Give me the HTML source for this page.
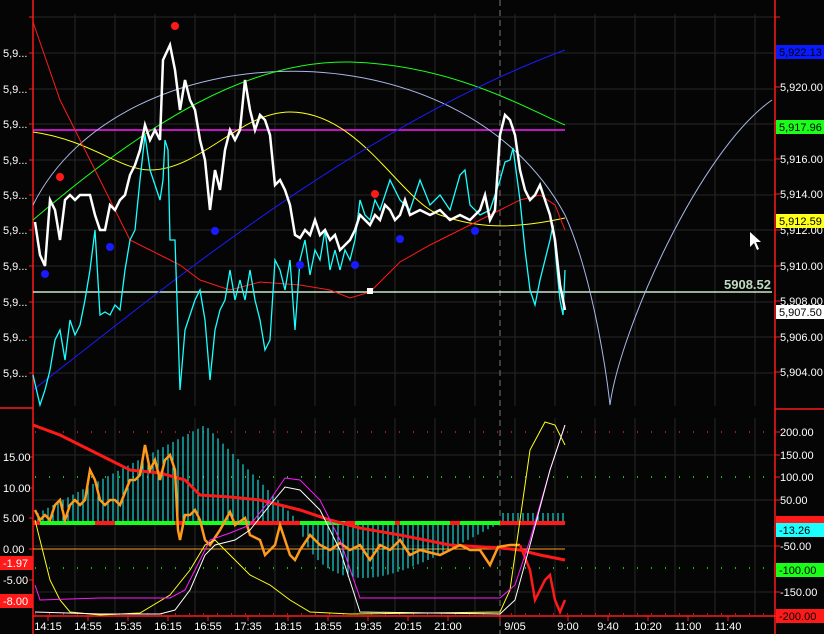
<!DOCTYPE html>
<html><head><meta charset="utf-8"><style>
html,body{margin:0;padding:0;background:#050505;}
svg{display:block;font-family:"Liberation Sans",sans-serif;}
</style></head><body>
<svg width="824" height="634" viewBox="0 0 824 634" xmlns="http://www.w3.org/2000/svg">
<rect width="824" height="634" fill="#050505"/>
<g stroke="#262626" stroke-width="1">
<path d="M75 14V406M115 14V406M155 14V406M195 14V406M235 14V406M275 14V406M315 14V406M355 14V406M395 14V406M435 14V406M475 14V406M515 14V406M555 14V406M595 14V406M635 14V406M675 14V406M715 14V406M755 14V406"/>
<path d="M33 17H775M33 53H775M33 89H775M33 124H775M33 160H775M33 195H775M33 230H775M33 266H775M33 302H775M33 337H775M33 373H775"/>
<path d="M75 418V616M115 418V616M155 418V616M195 418V616M235 418V616M275 418V616M315 418V616M355 418V616M395 418V616M435 418V616M475 418V616M515 418V616M555 418V616M595 418V616M635 418V616M675 418V616M715 418V616M755 418V616"/>
<path d="M33 455H775M33 500H775M33 546H775M33 592H775"/>
</g>
<line x1="500" y1="0" x2="500" y2="634" stroke="#777" stroke-dasharray="6,4"/>
<g stroke="#ff1a1a" stroke-width="1.5">
<line x1="33" y1="0" x2="33" y2="634"/>
<line x1="775" y1="0" x2="775" y2="634"/>
<line x1="0" y1="408" x2="33" y2="408"/>
<line x1="775" y1="409" x2="824" y2="409"/>
<line x1="33" y1="616" x2="824" y2="616"/>
</g>
<g stroke="#ff1a1a"><path d="M29 17H33M29 53H33M29 89H33M29 124H33M29 160H33M29 195H33M29 230H33M29 266H33M29 302H33M29 337H33M29 373H33M775 17H780M775 87H780M775 123H780M775 159H780M775 194H780M775 230H780M775 266H780M775 301H780M775 337H780M775 372H780M775 432H780M775 455H780M775 477H780M775 500H780M775 546H780M775 592H780M29 457H33M29 488H33M29 518H33M29 549H33M29 580H33M48 616V621M88 616V621M128 616V621M168 616V621M208 616V621M248 616V621M288 616V621M328 616V621M368 616V621M408 616V621M448 616V621M500 616V621M568 616V621M608 616V621M648 616V621M688 616V621M728 616V621"/></g>
<g fill="#fff" font-size="11">
<text x="3" y="57">5,9...</text><text x="3" y="93">5,9...</text><text x="3" y="128">5,9...</text><text x="3" y="164">5,9...</text><text x="3" y="199">5,9...</text><text x="3" y="234">5,9...</text><text x="3" y="270">5,9...</text><text x="3" y="306">5,9...</text><text x="3" y="341">5,9...</text><text x="3" y="377">5,9...</text>
<text x="3" y="461">15.00</text><text x="3" y="492">10.00</text><text x="3" y="522">5.00</text><text x="3" y="553">0.00</text><text x="3" y="584">-5.00</text>
</g>
<rect x="0" y="556" width="33" height="14" fill="#ff1a1a"/><text x="3" y="567" fill="#fff" font-size="11">-1.97</text>
<rect x="0" y="594" width="33" height="14" fill="#ff1a1a"/><text x="3" y="605" fill="#fff" font-size="11">-8.00</text>
<g fill="#fff" font-size="11">
<text x="780" y="91">5,920.00</text><text x="780" y="163">5,916.00</text><text x="780" y="198">5,914.00</text><text x="780" y="234">5,912.00</text><text x="780" y="270">5,910.00</text><text x="780" y="305">5,908.00</text><text x="780" y="341">5,906.00</text><text x="780" y="376">5,904.00</text>
<text x="780" y="436">200.00</text><text x="780" y="459">150.00</text><text x="780" y="481">100.00</text><text x="780" y="504">50.00</text><text x="780" y="550">-50.00</text><text x="780" y="596">-150.00</text>
</g>
<rect x="776" y="45" width="48" height="14" fill="#0a1aff"/><text x="779" y="56" font-size="11" fill="#000">5,922.13</text>
<rect x="776" y="120" width="48" height="14" fill="#1aff1a"/><text x="779" y="131" font-size="11" fill="#000">5,917.96</text>
<rect x="776" y="214" width="48" height="14" fill="#ffff1a"/><text x="779" y="225" font-size="11" fill="#000">5,912.59</text>
<rect x="776" y="305" width="48" height="14" fill="#fff"/><text x="779" y="316" font-size="11" fill="#000">5,907.50</text>
<rect x="776" y="516" width="48" height="8" fill="#ff1a1a"/>
<rect x="776" y="523" width="48" height="14" fill="#1affff"/><text x="779" y="534" font-size="11" fill="#000">-13.26</text>
<rect x="776" y="563" width="48" height="14" fill="#1aff1a"/><text x="779" y="574" font-size="11" fill="#000">-100.00</text>
<rect x="776" y="609" width="48" height="14" fill="#ff1a1a"/><text x="779" y="620" font-size="11" fill="#000">-200.00</text>
<g fill="#fff" font-size="11" text-anchor="middle">
<text x="48" y="630">14:15</text><text x="88" y="630">14:55</text><text x="128" y="630">15:35</text><text x="168" y="630">16:15</text><text x="208" y="630">16:55</text><text x="248" y="630">17:35</text><text x="288" y="630">18:15</text><text x="328" y="630">18:55</text><text x="368" y="630">19:35</text><text x="408" y="630">20:15</text><text x="448" y="630">21:00</text><text x="515" y="630">9/05</text><text x="568" y="630">9:00</text><text x="608" y="630">9:40</text><text x="648" y="630">10:20</text><text x="688" y="630">11:00</text><text x="728" y="630">11:40</text>
</g>
<line x1="33" y1="292" x2="772" y2="292" stroke="#c8e8c8" stroke-width="1.5"/>
<text x="771" y="289" text-anchor="end" fill="#c0dcc0" font-size="13" font-weight="bold">5908.52</text>
<line x1="33" y1="130" x2="565" y2="130" stroke="#ff1aff" stroke-width="1.5"/>
<path d="M33 205C120 30 460 20 565 215C590 270 605 360 610 405C620 330 700 150 772 100" fill="none" stroke="#a8b8e8" stroke-width="1"/>
<path d="M33 220C150 120 250 60 350 62C450 65 520 105 565 125" fill="none" stroke="#1aff1a" stroke-width="1"/>
<path d="M33 132C90 140 120 170 150 170C200 170 240 112 290 112C360 112 400 200 440 215C470 225 500 232 565 218" fill="none" stroke="#ffff1a" stroke-width="1"/>
<path d="M33 390C150 300 350 130 565 50" fill="none" stroke="#1a1aff" stroke-width="1"/>
<polyline fill="none" stroke="#ff1a1a" stroke-width="1" points="33,22 60,100 90,160 130,240 160,255 180,265 200,280 230,290 260,282 300,285 330,290 350,298 370,292 400,262 430,245 460,230 480,220 500,210 520,200 540,195 555,205 565,230"/>
<polyline fill="none" stroke="#1affff" stroke-width="1.3" points="33,375 40,405 45,390 50,370 55,340 60,330 65,360 70,320 75,335 80,325 85,300 90,270 95,230 100,315 105,312 110,315 115,305 120,310 125,270 130,240 135,230 140,180 145,135 150,170 155,185 160,200 163,180 165,140 168,150 170,240 175,240 180,390 185,330 190,315 195,300 200,290 205,320 210,380 215,330 220,310 225,300 230,270 235,300 240,280 245,300 250,270 255,300 260,320 265,350 270,340 275,260 280,270 285,290 290,260 295,330 300,260 305,240 310,275 315,250 320,260 325,230 330,270 335,250 340,270 345,250 350,260 355,240 360,200 365,215 370,220 375,200 380,210 390,180 400,200 410,210 420,180 430,205 440,195 450,210 460,175 465,170 470,205 480,215 490,210 500,180 505,162 510,160 513,148 520,200 525,250 530,290 535,305 540,280 545,260 550,240 553,225 557,270 560,300 563,315 565,270"/>
<polyline fill="none" stroke="#fff" stroke-width="2.5" points="35,222 40,255 45,266 50,200 55,210 60,240 65,200 70,195 75,200 80,195 85,195 90,195 95,215 100,230 105,230 110,205 115,210 120,200 125,195 130,175 135,165 140,150 145,125 150,140 155,130 160,140 163,60 170,45 175,70 180,110 185,80 190,100 195,110 200,140 205,160 210,210 215,170 220,190 225,150 230,130 235,140 240,130 245,80 250,110 255,130 260,115 265,120 270,135 275,185 280,180 285,190 290,205 295,235 300,238 305,230 310,235 315,220 320,235 325,230 330,240 335,235 340,250 345,245 350,240 355,230 360,215 365,220 370,225 375,215 380,220 385,205 390,210 395,220 400,215 405,200 410,215 420,210 430,215 440,210 450,220 460,215 470,220 480,210 485,195 490,220 495,210 500,135 505,115 510,120 515,135 520,170 525,190 530,200 535,195 540,185 545,200 550,215 555,240 560,285 565,310"/>
<g fill="#ff1a1a"><circle cx="175" cy="26" r="4"/><circle cx="60" cy="177" r="4"/><circle cx="375" cy="194" r="4"/></g>
<g fill="#1a1aff"><circle cx="45" cy="274" r="4"/><circle cx="110" cy="247" r="4"/><circle cx="215" cy="231" r="4"/><circle cx="300" cy="265" r="4"/><circle cx="355" cy="265" r="4"/><circle cx="400" cy="239" r="4"/><circle cx="475" cy="231" r="4"/></g>
<rect x="367" y="288" width="6" height="6" fill="#fff"/>
<path d="M750 232V247L754 243L757 250L759 249L756 242L761 242Z" fill="#fff"/>
<g stroke="#ff1a1a" stroke-width="1.5" stroke-dasharray="1,13"><line x1="35" y1="432" x2="775" y2="432"/><line x1="35" y1="614" x2="775" y2="614"/></g>
<g stroke="#1aff1a" stroke-width="1.5" stroke-dasharray="1,13"><line x1="35" y1="477" x2="775" y2="477"/><line x1="35" y1="568" x2="775" y2="568"/></g>
<line x1="33" y1="549" x2="565" y2="549" stroke="#ff9a1a" stroke-width="1"/>
<g id="bars" stroke="#1affff" stroke-width="1"></g>
<line x1="33" y1="523" x2="565" y2="523" stroke="#ff1a1a" stroke-width="4"/>
<g stroke="#1aff1a" stroke-width="4"><line x1="40" y1="523" x2="95" y2="523"/><line x1="115" y1="523" x2="175" y2="523"/><line x1="185" y1="523" x2="250" y2="523"/><line x1="300" y1="523" x2="345" y2="523"/><line x1="355" y1="523" x2="395" y2="523"/><line x1="400" y1="523" x2="450" y2="523"/><line x1="460" y1="523" x2="500" y2="523"/></g>
<polyline fill="none" stroke="#ff1a1a" stroke-width="3" points="33,425 60,435 100,455 130,470 160,473 185,480 200,495 230,497 260,500 300,510 330,520 360,528 400,535 450,545 500,548 520,550 540,555 565,560"/>
<polyline fill="none" stroke="#ff9a1a" stroke-width="2.5" points="35,510 40,520 45,515 50,520 55,505 60,500 65,520 70,505 75,500 80,505 85,500 90,470 95,480 100,500 105,505 110,500 115,500 120,505 130,480 135,480 140,475 145,445 150,470 155,460 160,480 165,460 170,455 175,470 178,530 180,540 185,515 190,515 195,510 200,520 205,540 210,545 220,530 230,512 235,525 245,518 250,535 260,540 265,555 275,545 280,525 285,540 290,555 295,560 300,550 310,535 320,545 330,550 340,543 350,550 360,545 370,560 380,545 390,550 400,540 410,555 420,550 440,555 460,545 470,550 480,550 490,565 498,547 510,545 520,545"/>
<polyline fill="none" stroke="#ff1a1a" stroke-width="2.5" points="520,545 530,570 535,600 545,580 550,575 555,600 560,612 565,600"/>
<polyline fill="none" stroke="#ffff1a" stroke-width="1" points="35,520 40,540 50,580 60,600 70,612 100,615 140,613 170,595 190,570 205,545 215,540 230,555 250,575 270,585 290,600 310,612 350,614 500,612 510,590 520,520 530,450 545,422 555,425 565,445"/>
<polyline fill="none" stroke="#ff1aff" stroke-width="1" points="35,585 40,600 100,598 170,598 185,590 200,560 210,540 230,533 250,525 270,500 285,478 300,480 320,500 340,540 360,598 500,598 515,585 530,540 550,470 565,425"/>
<polyline fill="none" stroke="#fff" stroke-width="1" points="35,612 100,614 160,614 175,610 190,590 205,555 215,545 235,540 250,530 270,505 285,487 300,490 320,510 340,550 360,612 500,614 515,600 530,545 550,470 565,425"/>
</svg>
<script>
(function(){var g=document.getElementById('bars');var s='';
for(var x=38;x<=565;x+=5){var h;
if(x<205){h=-(10+ (x-38)/167*88);}
else if(x<300){h=-98*(300-x)/95;}
else if(x<500){var t=(x-300)/200;h=55*Math.sin(Math.PI*Math.pow(t,0.6));}
else {h=-10;}
s+='<line x1="'+x+'" y1="523" x2="'+x+'" y2="'+(523+h).toFixed(1)+'"/>';}
g.innerHTML=s;})();
</script>
</body></html>
